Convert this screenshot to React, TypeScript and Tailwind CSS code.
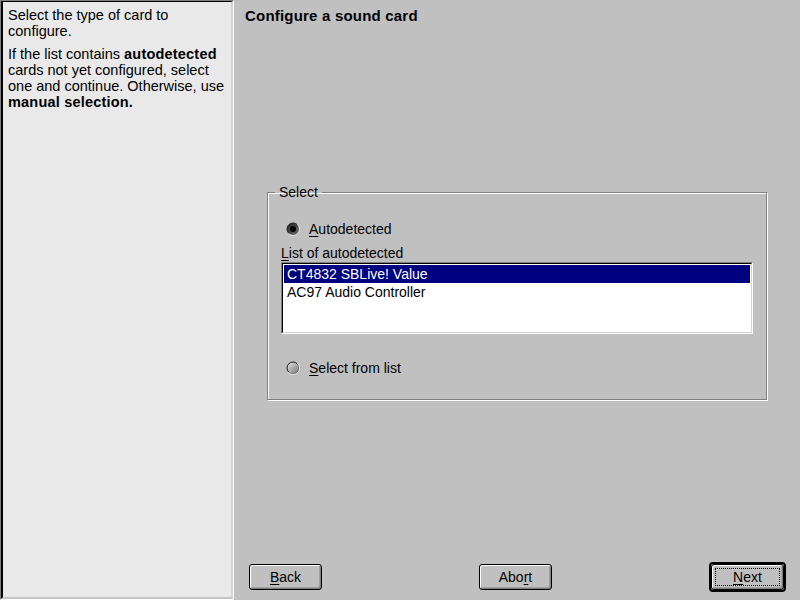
import React from 'react';

function Radio({ checked }: { checked?: boolean }) {
  return (
    <svg width="14" height="14" viewBox="0 0 14 14" className="shrink-0">
      <defs>
        <linearGradient id={checked ? 'rg1' : 'rg0'} x1="0" y1="0" x2="1" y2="1">
          <stop offset="0" stopColor={checked ? '#202020' : '#ececec'} />
          <stop offset="1" stopColor={checked ? '#707070' : '#6e6e6e'} />
        </linearGradient>
      </defs>
      <circle cx="7" cy="7" r="6" fill={`url(#${checked ? 'rg1' : 'rg0'})`} stroke="#1a1a1a" strokeWidth="1" />
      <path d="M2.5 11.5 A6.3 6.3 0 0 0 11.5 2.5" fill="none" stroke="#fff" strokeWidth="1" />
      {checked && <circle cx="7" cy="7" r="3" fill="#000" />}
    </svg>
  );
}

function Btn({ children, primary }: { children: React.ReactNode; primary?: boolean }) {
  const inner = (
    <div className="w-[73px] h-[26px] rounded-[3px] border border-black bg-[#c0c0c0] shadow-[inset_1px_1px_0_#fff,inset_-1px_-1px_0_#808080,inset_-2px_-2px_0_#a0a0a0] flex items-center justify-center text-[14px] text-black">
      {primary ? (
        <span className="w-[65px] h-[18px] border border-dotted border-black flex items-center justify-center">{children}</span>
      ) : (
        children
      )}
    </div>
  );
  if (!primary) return inner;
  return <div className="rounded-[4px] border-2 border-black">{inner}</div>;
}

export default function App() {
  return (
    <div className="w-[800px] h-[600px] flex bg-[#c0c0c0] font-['Liberation_Sans',Arial,sans-serif] text-black overflow-hidden">
      {/* help panel */}
      <div className="w-[234px] h-full border-t border-l border-t-[#808080] border-l-[#808080] border-b border-r border-b-white border-r-white">
        <div className="h-full overflow-hidden border-t border-l-2 border-t-black border-l-black border-b-2 border-r-2 border-b-[#c4c4c4] border-r-[#d4d4d4] bg-[#e9e9e9] pl-[5px] pt-[5px] text-[14.5px] leading-[16px] whitespace-nowrap">
          <p>
            Select the type of card to
            <br />
            configure.
          </p>
          <p className="mt-[7px]">
            If the list contains <b className="tracking-[0.2px]">autodetected</b>
            <br />
            cards not yet configured, select
            <br />
            one and continue. Otherwise, use
            <br />
            <b className="tracking-[0.2px]">manual selection.</b>
          </p>
        </div>
      </div>

      {/* main */}
      <div className="flex-1 flex flex-col">
        <h1 className="pl-[11px] pt-[6px] text-[15px] leading-[20px] font-bold tracking-[0.2px]">Configure a sound card</h1>

        <div className="flex-1 flex items-center justify-center">
          <fieldset className="w-[500px] h-[216px] border border-[#808080] shadow-[1px_1px_0_#fff,inset_1px_1px_0_#fff] px-[13px] pt-[14px] m-0 min-w-0">
            <legend className="-ml-[6px] px-[4px] text-[14px] leading-[16px]">Select</legend>
            <label className="flex items-center gap-[9px] h-[18px] pl-[5px] mt-[6px] text-[14px]">
              <Radio checked />
              <span>
                <u className="underline-offset-2">A</u>utodetected
              </span>
            </label>
            <div className="mt-[6px] text-[14px] leading-[18px]">
              <u className="underline-offset-2">L</u>ist of autodetected
            </div>
            <div className="mt-0 h-[72px] border-t border-l border-t-[#808080] border-l-[#808080] border-b border-r border-b-white border-r-white">
              <div className="h-full border-t border-l border-t-black border-l-black border-b border-r border-b-[#d4d4d4] border-r-[#d4d4d4] bg-white p-[1px] text-[14px]">
                <div className="h-[18px] leading-[18px] bg-[#000080] text-white pl-[3px]">CT4832 SBLive! Value</div>
                <div className="h-[18px] leading-[18px] pl-[3px]">AC97 Audio Controller</div>
              </div>
            </div>
            <label className="flex items-center gap-[9px] h-[18px] pl-[5px] mt-[25px] text-[14px]">
              <Radio />
              <span>
                <u className="underline-offset-2">S</u>elect from list
              </span>
            </label>
          </fieldset>
        </div>

        <div className="flex items-center justify-between pl-[15px] pr-[14px] pb-[8px] pt-[4px]">
          <Btn>
            <span>
              <u className="underline-offset-2">B</u>ack
            </span>
          </Btn>
          <Btn>
            <span>
              Abo<u className="underline-offset-2">r</u>t
            </span>
          </Btn>
          <Btn primary>
            <span>
              <u className="underline-offset-2">N</u>ext
            </span>
          </Btn>
        </div>
      </div>
    </div>
  );
}
